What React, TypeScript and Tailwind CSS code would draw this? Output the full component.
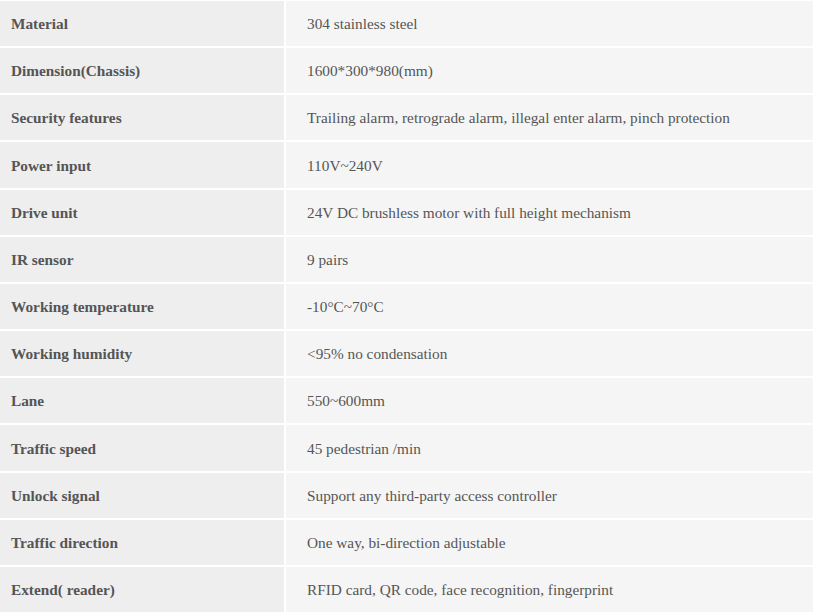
const specs: [string, string][] = [
  ["Material", "304 stainless steel"],
  ["Dimension(Chassis)", "1600*300*980(mm)"],
  ["Security features", "Trailing alarm, retrograde alarm, illegal enter alarm, pinch protection"],
  ["Power input", "110V~240V"],
  ["Drive unit", "24V DC brushless motor with full height mechanism"],
  ["IR sensor", "9 pairs"],
  ["Working temperature", "-10°C~70°C"],
  ["Working humidity", "<95% no condensation"],
  ["Lane", "550~600mm"],
  ["Traffic speed", "45 pedestrian /min"],
  ["Unlock signal", "Support any third-party access controller"],
  ["Traffic direction", "One way, bi-direction adjustable"],
  ["Extend( reader)", "RFID card, QR code, face recognition, fingerprint"],
];

export default function App() {
  return (
    <div className="w-[814px] h-[613px] overflow-hidden bg-white pt-[1px] font-['Liberation_Serif',serif] text-[15.3px] text-[#555]">
      <div className="grid grid-cols-[284px_1fr] gap-[2px] w-[813px]">
        {specs.map(([label, value]) => (
          <div key={label} className="contents">
            <div className="h-[45.17px] flex items-center pt-[2px] pl-[11px] bg-[#eeeeee] font-bold">
              {label}
            </div>
            <div className="h-[45.17px] flex items-center pt-[2px] pl-[21px] bg-[#f5f5f5]">
              {value}
            </div>
          </div>
        ))}
      </div>
    </div>
  );
}
